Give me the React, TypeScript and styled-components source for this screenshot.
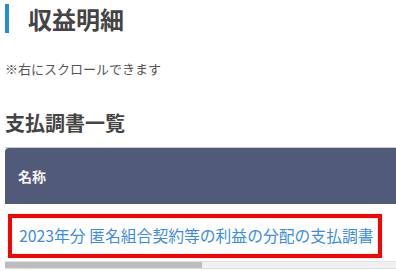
import React from 'react'
import styled, { createGlobalStyle } from 'styled-components'

const GlobalStyle = createGlobalStyle`
  html, body {
    margin: 0;
    padding: 0;
    background: #fff;
  }
  body {
    font-family: 'Noto Sans CJK JP', 'Noto Sans', sans-serif;
    color: #444;
  }
`

const StyledPage = styled('div')`
  padding: 4px 0 0 5px;
`

const StyledTitle = styled('h1')`
  margin: 0;
  border-left: 4px solid #1f8fd9;
  padding-left: 19px;
  height: 29px;
  line-height: 29px;
  font-size: 24px;
  font-weight: 700;
  color: #444;
`

const StyledNote = styled('p')`
  margin: 27px 0 0;
  font-size: 13px;
  line-height: 18px;
  color: #555;
`

const StyledHeading = styled('h2')`
  margin: 31px 0 0;
  font-size: 20px;
  line-height: 28px;
  font-weight: 700;
  color: #444;
`

const StyledScroller = styled('div')`
  margin-top: 10px;
  overflow-x: auto;
  scrollbar-width: none;
  &::-webkit-scrollbar {
    display: none;
  }
`

const StyledTable = styled('table')`
  width: 776px;
  border-collapse: collapse;
`

const StyledHeadCell = styled('th')`
  background: #525a7a;
  color: #f2f2f2;
  text-align: left;
  font-size: 14px;
  font-weight: 700;
  height: 56px;
  padding: 0 13px;
  border-top: 1px solid #c8cad4;
  border-radius: 4px 4px 0 0;
`

const StyledCell = styled('td')`
  padding: 10px 0 3px 3px;
  border-bottom: 1px solid #e2e2e2;
`

const StyledLink = styled('a')`
  display: inline-block;
  border: 4px solid #ff0000;
  padding: 6px 4px 6px 7px;
  font-size: 15.8px;
  line-height: 24px;
  color: #3b8de4;
  text-decoration: none;
  white-space: nowrap;
`

const StyledScrollTrack = styled('div')`
  height: 6px;
  background: #f0f0f0;
  border-bottom: 1px solid #e0e0e0;
`

const StyledScrollThumb = styled('div')`
  height: 100%;
  background: #bcbcbc;
`

export default function App() {
  const thumbWidth = 197
  return (
    <StyledPage>
      <GlobalStyle />
      <StyledTitle>収益明細</StyledTitle>
      <StyledNote>※右にスクロールできます</StyledNote>
      <StyledHeading>支払調書一覧</StyledHeading>
      <StyledScroller>
        <StyledTable>
          <thead>
            <tr>
              <StyledHeadCell>名称</StyledHeadCell>
            </tr>
          </thead>
          <tbody>
            <tr>
              <StyledCell>
                <StyledLink href='#'>2023年分 匿名組合契約等の利益の分配の支払調書</StyledLink>
              </StyledCell>
            </tr>
          </tbody>
        </StyledTable>
      </StyledScroller>
      <StyledScrollTrack>
        <StyledScrollThumb style={{ width: thumbWidth }} />
      </StyledScrollTrack>
    </StyledPage>
  )
}
